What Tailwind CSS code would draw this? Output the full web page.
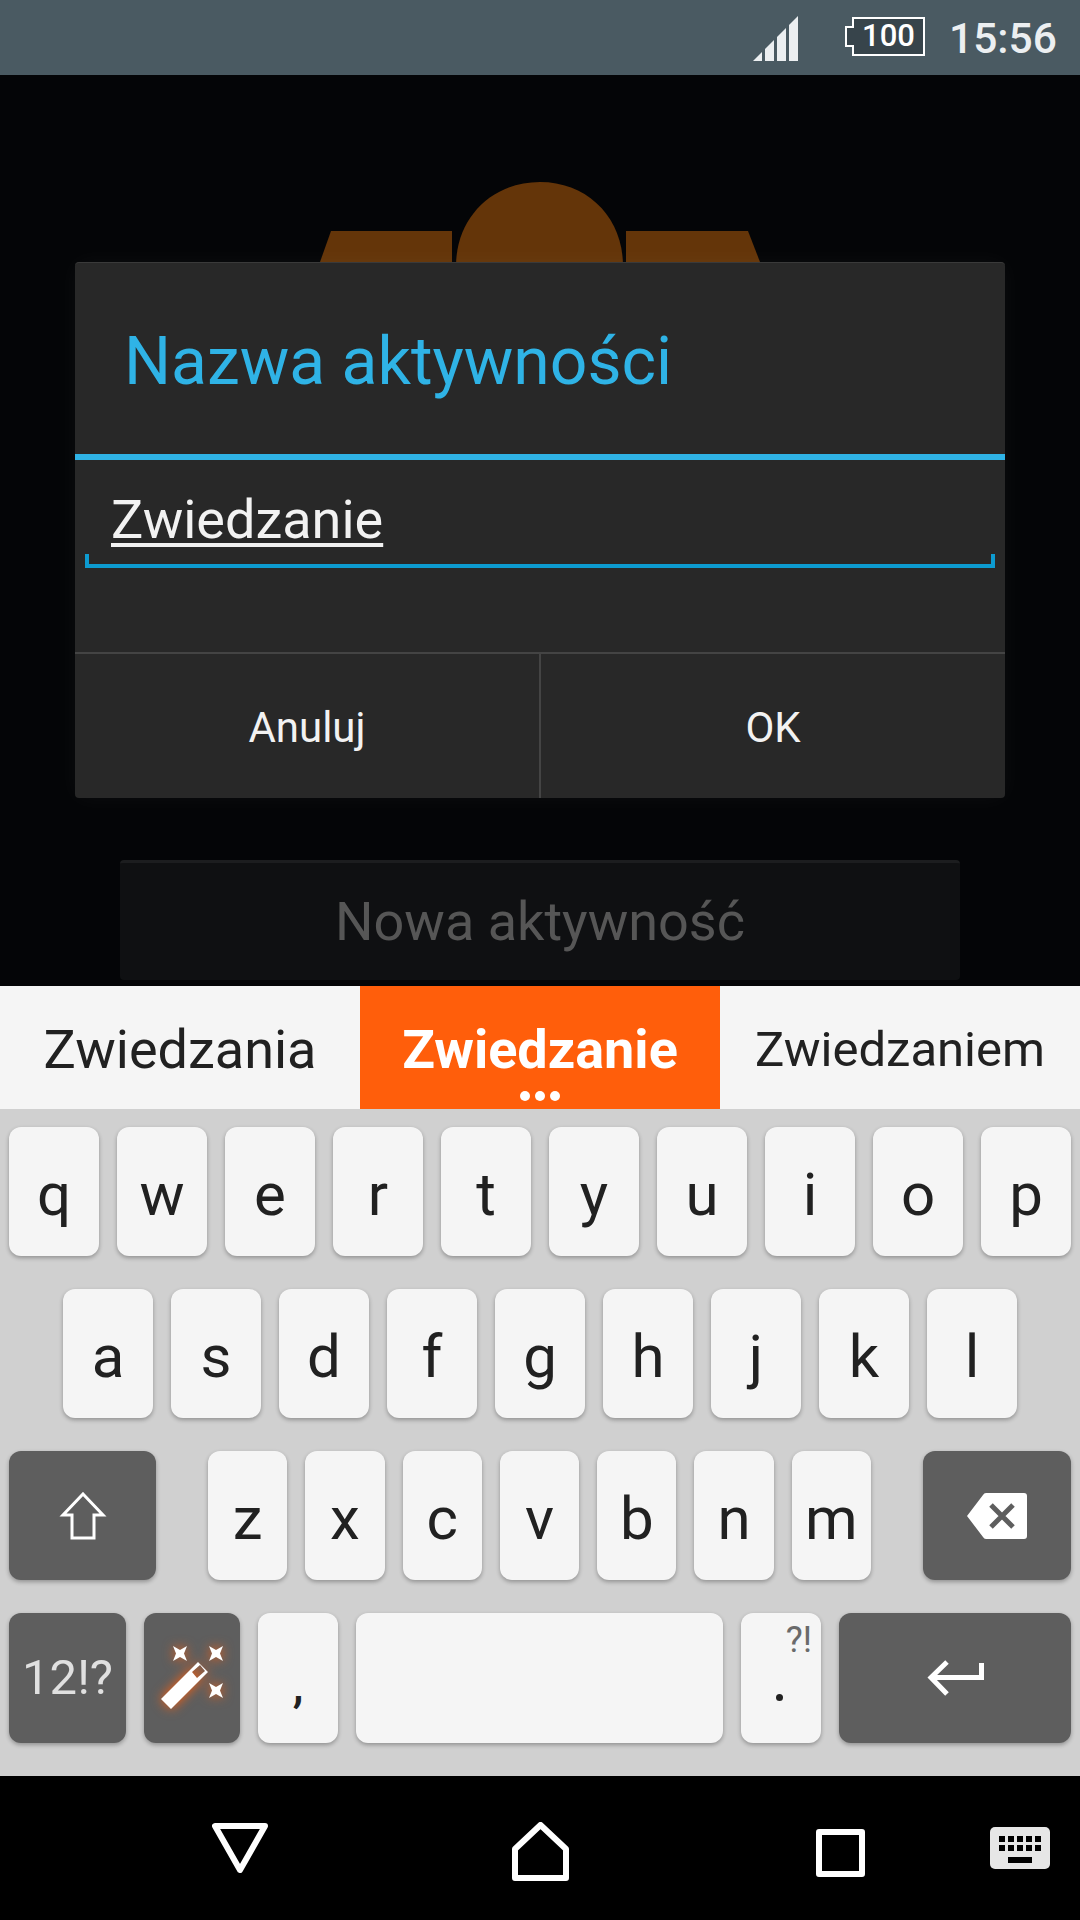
<!DOCTYPE html>
<html>
<head>
<meta charset="utf-8">
<script src="https://cdn.jsdelivr.net/npm/@tailwindcss/browser@4"></script>
</head>
<body class="m-0">
<div class="w-[1080px] h-[1920px] flex flex-col overflow-hidden bg-black font-['Roboto',sans-serif]">
  <!-- status bar -->
  <div class="h-[75px] shrink-0 bg-[#4a5a62] flex items-start text-[#eceff1]">
    <svg class="ml-[753px] mt-[16px] w-[45px] h-[45px] shrink-0" viewBox="0 0 45 45" fill="#eceff1"><path d="M0 45L9 36V45Z"/><path d="M12 33L21 24V45H12Z"/><path d="M24 21L33 12V45H24Z"/><path d="M36 9L45 0V45H36Z"/></svg>
    <div class="ml-[47px] mt-[17px] w-[80px] h-[39px] relative shrink-0">
      <svg class="absolute inset-0" width="80" height="39" viewBox="0 0 80 39"><path d="M8 1H79V38H8V29H1V10H8Z" fill="#37444b" stroke="#fff" stroke-width="2"/></svg>
      <span class="absolute inset-0 flex items-center justify-center pl-[7px] text-[31px] font-medium text-white">100</span>
    </div>
    <span class="ml-[24px] mt-[15px] text-[42.500px] leading-[48px] font-medium">15:56</span>
  </div>

  <!-- dimmed activity -->
  <div class="h-[911px] shrink-0 relative bg-[#040507] flex flex-col items-center pt-[107px]">
    <svg class="w-[440px] h-[100px] shrink-0" viewBox="0 0 440 100" fill="#643509"><path d="M0 80L11 49H132V100H0Z"/><path d="M136 100V84C136 36 172 0 220 0C268 0 303 36 303 84V100Z"/><path d="M306 49H428L440 80V100H306Z"/></svg>
    <div class="mt-[578px] w-[840px] h-[120px] bg-[#0f1012] border-t-[3px] border-[#1c1d1f] rounded-[4px] flex items-center justify-center text-[54px] text-[#565656]">Nowa aktywność</div>

    <!-- dialog -->
    <div class="absolute left-[75px] top-[187px] w-[930px] h-[536px] bg-[#282828] rounded-[4px] border-t border-[#3a3a3a] shadow-[0_0_24px_rgba(255,255,255,0.04)] flex flex-col">
      <div class="h-[191px] shrink-0 flex items-center pl-[49px] pt-[6px] text-[66px] text-[#2fb3e6]">Nazwa aktywności</div>
      <div class="h-[6px] shrink-0 bg-[#2fb3e6]"></div>
      <div class="h-[192px] shrink-0 flex flex-col">
        <span class="ml-[36px] mt-[25px] h-[70px] leading-[70px] text-[54px] text-[#f2f2f2] underline underline-offset-[5px] decoration-[4px]">Zwiedzanie</span>
        <div class="-mt-px mx-[10px] h-[14px] border-x-[4px] border-b-[4px] border-[#0d9bd0]"></div>
      </div>
      <div class="flex-1 flex border-t-2 border-[#444444] text-[42px] text-[#f2f2f2]">
        <div class="w-[466px] flex items-center justify-center pt-[2px] border-r-2 border-[#444444]">Anuluj</div>
        <div class="flex-1 flex items-center justify-center pt-[2px]">OK</div>
      </div>
    </div>
  </div>

  <!-- suggestions -->
  <div class="h-[123px] shrink-0 bg-[#f5f5f5] flex text-[#212121] text-[54px] pt-[4px]">
    <div class="w-[360px] flex items-center justify-center">Zwiedzania</div>
    <div class="w-[360px] -mt-[4px] bg-[#ff5e0b] flex flex-col items-center justify-center relative pt-[4px] font-bold text-white">Zwiedzanie
      <div class="absolute bottom-[8px] flex gap-[5px]"><i class="block w-[10px] h-[10px] rounded-full bg-white"></i><i class="block w-[10px] h-[10px] rounded-full bg-white"></i><i class="block w-[10px] h-[10px] rounded-full bg-white"></i></div>
    </div>
    <div class="w-[360px] flex items-center justify-center text-[49px]">Zwiedzaniem</div>
  </div>

  <!-- keyboard -->
  <div class="h-[667px] shrink-0 bg-[#d0d0d0] px-[9px] pt-[18px] flex flex-col gap-[33px] text-[60px] text-[#212121]">
    <div class="h-[129px] flex gap-[18px]">
      <div class="w-[90px] bg-[#f5f5f5] rounded-[12px] shadow-[0_2px_4px_rgba(0,0,0,0.3)] flex items-center justify-center pt-[6px]">q</div>
      <div class="w-[90px] bg-[#f5f5f5] rounded-[12px] shadow-[0_2px_4px_rgba(0,0,0,0.3)] flex items-center justify-center pt-[6px]">w</div>
      <div class="w-[90px] bg-[#f5f5f5] rounded-[12px] shadow-[0_2px_4px_rgba(0,0,0,0.3)] flex items-center justify-center pt-[6px]">e</div>
      <div class="w-[90px] bg-[#f5f5f5] rounded-[12px] shadow-[0_2px_4px_rgba(0,0,0,0.3)] flex items-center justify-center pt-[6px]">r</div>
      <div class="w-[90px] bg-[#f5f5f5] rounded-[12px] shadow-[0_2px_4px_rgba(0,0,0,0.3)] flex items-center justify-center pt-[6px]">t</div>
      <div class="w-[90px] bg-[#f5f5f5] rounded-[12px] shadow-[0_2px_4px_rgba(0,0,0,0.3)] flex items-center justify-center pt-[6px]">y</div>
      <div class="w-[90px] bg-[#f5f5f5] rounded-[12px] shadow-[0_2px_4px_rgba(0,0,0,0.3)] flex items-center justify-center pt-[6px]">u</div>
      <div class="w-[90px] bg-[#f5f5f5] rounded-[12px] shadow-[0_2px_4px_rgba(0,0,0,0.3)] flex items-center justify-center pt-[6px]">i</div>
      <div class="w-[90px] bg-[#f5f5f5] rounded-[12px] shadow-[0_2px_4px_rgba(0,0,0,0.3)] flex items-center justify-center pt-[6px]">o</div>
      <div class="w-[90px] bg-[#f5f5f5] rounded-[12px] shadow-[0_2px_4px_rgba(0,0,0,0.3)] flex items-center justify-center pt-[6px]">p</div>
    </div>
    <div class="h-[129px] flex gap-[18px] pl-[54px]">
      <div class="w-[90px] bg-[#f5f5f5] rounded-[12px] shadow-[0_2px_4px_rgba(0,0,0,0.3)] flex items-center justify-center pt-[6px]">a</div>
      <div class="w-[90px] bg-[#f5f5f5] rounded-[12px] shadow-[0_2px_4px_rgba(0,0,0,0.3)] flex items-center justify-center pt-[6px]">s</div>
      <div class="w-[90px] bg-[#f5f5f5] rounded-[12px] shadow-[0_2px_4px_rgba(0,0,0,0.3)] flex items-center justify-center pt-[6px]">d</div>
      <div class="w-[90px] bg-[#f5f5f5] rounded-[12px] shadow-[0_2px_4px_rgba(0,0,0,0.3)] flex items-center justify-center pt-[6px]">f</div>
      <div class="w-[90px] bg-[#f5f5f5] rounded-[12px] shadow-[0_2px_4px_rgba(0,0,0,0.3)] flex items-center justify-center pt-[6px]">g</div>
      <div class="w-[90px] bg-[#f5f5f5] rounded-[12px] shadow-[0_2px_4px_rgba(0,0,0,0.3)] flex items-center justify-center pt-[6px]">h</div>
      <div class="w-[90px] bg-[#f5f5f5] rounded-[12px] shadow-[0_2px_4px_rgba(0,0,0,0.3)] flex items-center justify-center pt-[6px]">j</div>
      <div class="w-[90px] bg-[#f5f5f5] rounded-[12px] shadow-[0_2px_4px_rgba(0,0,0,0.3)] flex items-center justify-center pt-[6px]">k</div>
      <div class="w-[90px] bg-[#f5f5f5] rounded-[12px] shadow-[0_2px_4px_rgba(0,0,0,0.3)] flex items-center justify-center pt-[6px]">l</div>
    </div>
    <div class="h-[129px] flex">
      <div class="w-[147px] shrink-0 bg-[#5e5e5e] rounded-[12px] shadow-[0_2px_4px_rgba(0,0,0,0.3)] flex items-center justify-center">
        <svg class="w-[48px] h-[48px]" viewBox="0 0 48 48" fill="none" stroke="#fff" stroke-width="3"><path d="M24 2L44 23H35V46H13V23H4Z"/></svg>
      </div>
      <div class="ml-[52px] w-[663px] shrink-0 flex gap-[18px]">
        <div class="flex-1 bg-[#f5f5f5] rounded-[12px] shadow-[0_2px_4px_rgba(0,0,0,0.3)] flex items-center justify-center pt-[6px]">z</div>
        <div class="flex-1 bg-[#f5f5f5] rounded-[12px] shadow-[0_2px_4px_rgba(0,0,0,0.3)] flex items-center justify-center pt-[6px]">x</div>
        <div class="flex-1 bg-[#f5f5f5] rounded-[12px] shadow-[0_2px_4px_rgba(0,0,0,0.3)] flex items-center justify-center pt-[6px]">c</div>
        <div class="flex-1 bg-[#f5f5f5] rounded-[12px] shadow-[0_2px_4px_rgba(0,0,0,0.3)] flex items-center justify-center pt-[6px]">v</div>
        <div class="flex-1 bg-[#f5f5f5] rounded-[12px] shadow-[0_2px_4px_rgba(0,0,0,0.3)] flex items-center justify-center pt-[6px]">b</div>
        <div class="flex-1 bg-[#f5f5f5] rounded-[12px] shadow-[0_2px_4px_rgba(0,0,0,0.3)] flex items-center justify-center pt-[6px]">n</div>
        <div class="flex-1 bg-[#f5f5f5] rounded-[12px] shadow-[0_2px_4px_rgba(0,0,0,0.3)] flex items-center justify-center pt-[6px]">m</div>
      </div>
      <div class="ml-[52px] w-[148px] shrink-0 bg-[#5e5e5e] rounded-[12px] shadow-[0_2px_4px_rgba(0,0,0,0.3)] flex items-center justify-center">
        <svg class="w-[60px] h-[46px]" viewBox="0 0 60 46"><path d="M0 23L16 2Q17 0 19 0H57Q60 0 60 3V43Q60 46 57 46H19Q17 46 16 44Z" fill="#fff"/><path d="M24 12L46 34M46 12L24 34" stroke="#5e5e5e" stroke-width="5"/></svg>
      </div>
    </div>
    <div class="h-[130px] flex gap-[18px]">
      <div class="w-[117px] shrink-0 bg-[#5e5e5e] rounded-[12px] shadow-[0_2px_4px_rgba(0,0,0,0.3)] flex items-center justify-center text-[#e0e0e0] text-[49px]">12!?</div>
      <div class="w-[96px] shrink-0 bg-[#5e5e5e] rounded-[12px] shadow-[0_2px_4px_rgba(0,0,0,0.3)] flex items-center justify-center">
        <svg class="w-[64px] h-[64px] drop-shadow-[0_0_6px_#ff5e0b] overflow-visible" viewBox="0 0 64 64" fill="#fff"><path fill-rule="evenodd" d="M1 53L38 16L48 26L11 63ZM32 26L37 32L45 25L40 19Z"/><path d="M13 0L20 4L27 0L24 7.500L27 15L20 11L13 15L16 7.500Z"/><path d="M49 0L56 4L63 0L60 7.500L63 15L56 11L49 15L52 7.500Z"/><path d="M49 37L56 41L63 37L60 44.500L63 52L56 48L49 52L52 44.500Z"/></svg>
      </div>
      <div class="w-[80px] shrink-0 bg-[#f5f5f5] rounded-[12px] shadow-[0_2px_4px_rgba(0,0,0,0.3)] flex items-center justify-center pt-[14px] text-[48px] font-medium">,</div>
      <div class="w-[367px] shrink-0 bg-[#f5f5f5] rounded-[12px] shadow-[0_2px_4px_rgba(0,0,0,0.3)]"></div>
      <div class="w-[80px] shrink-0 bg-[#f5f5f5] rounded-[12px] shadow-[0_2px_4px_rgba(0,0,0,0.3)] flex flex-col items-end pr-[9px] text-[#6a6a6a] text-[36px] relative">?!
        <i class="absolute left-[35px] top-[81px] block w-[7px] h-[7px] rounded-full bg-[#212121]"></i>
      </div>
      <div class="w-[232px] shrink-0 bg-[#5e5e5e] rounded-[12px] shadow-[0_2px_4px_rgba(0,0,0,0.3)] flex items-center justify-center">
        <svg class="w-[57px] h-[36px]" viewBox="0 0 57 36" fill="none" stroke="#fff" stroke-width="5"><path d="M54.500 3V17.500H3"/><path d="M20 2L4 17.500L20 34"/></svg>
      </div>
    </div>
  </div>

  <!-- navigation bar -->
  <div class="flex-1 bg-black relative">
    <svg class="absolute left-[212px] top-[47px]" width="56" height="50" viewBox="0 0 56 50" fill="none" stroke="#fff" stroke-width="6" stroke-linejoin="round"><path d="M3 3H53L28 47Z"/></svg>
    <svg class="absolute left-[512px] top-[46px]" width="57" height="59" viewBox="0 0 57 59" fill="none" stroke="#fff" stroke-width="6" stroke-linejoin="round"><path d="M3 27L28.500 3L54 27V56H3Z"/></svg>
    <svg class="absolute left-[816px] top-[53px]" width="49" height="48" viewBox="0 0 49 48" fill="none" stroke="#fff" stroke-width="6" stroke-linejoin="round"><rect x="3" y="3" width="43" height="42"/></svg>
    <svg class="absolute left-[990px] top-[51px]" width="60" height="42" viewBox="0 0 60 42"><rect width="60" height="42" rx="5" fill="#e6e6e6"/><g fill="#000"><rect x="9" y="9" width="6" height="6"/><rect x="18" y="9" width="6" height="6"/><rect x="27" y="9" width="6" height="6"/><rect x="36" y="9" width="6" height="6"/><rect x="45" y="9" width="6" height="6"/><rect x="9" y="18" width="6" height="6"/><rect x="18" y="18" width="6" height="6"/><rect x="27" y="18" width="6" height="6"/><rect x="36" y="18" width="6" height="6"/><rect x="45" y="18" width="6" height="6"/><rect x="18" y="30" width="24" height="6"/></g></svg>
  </div>
</div>
</body>
</html>
